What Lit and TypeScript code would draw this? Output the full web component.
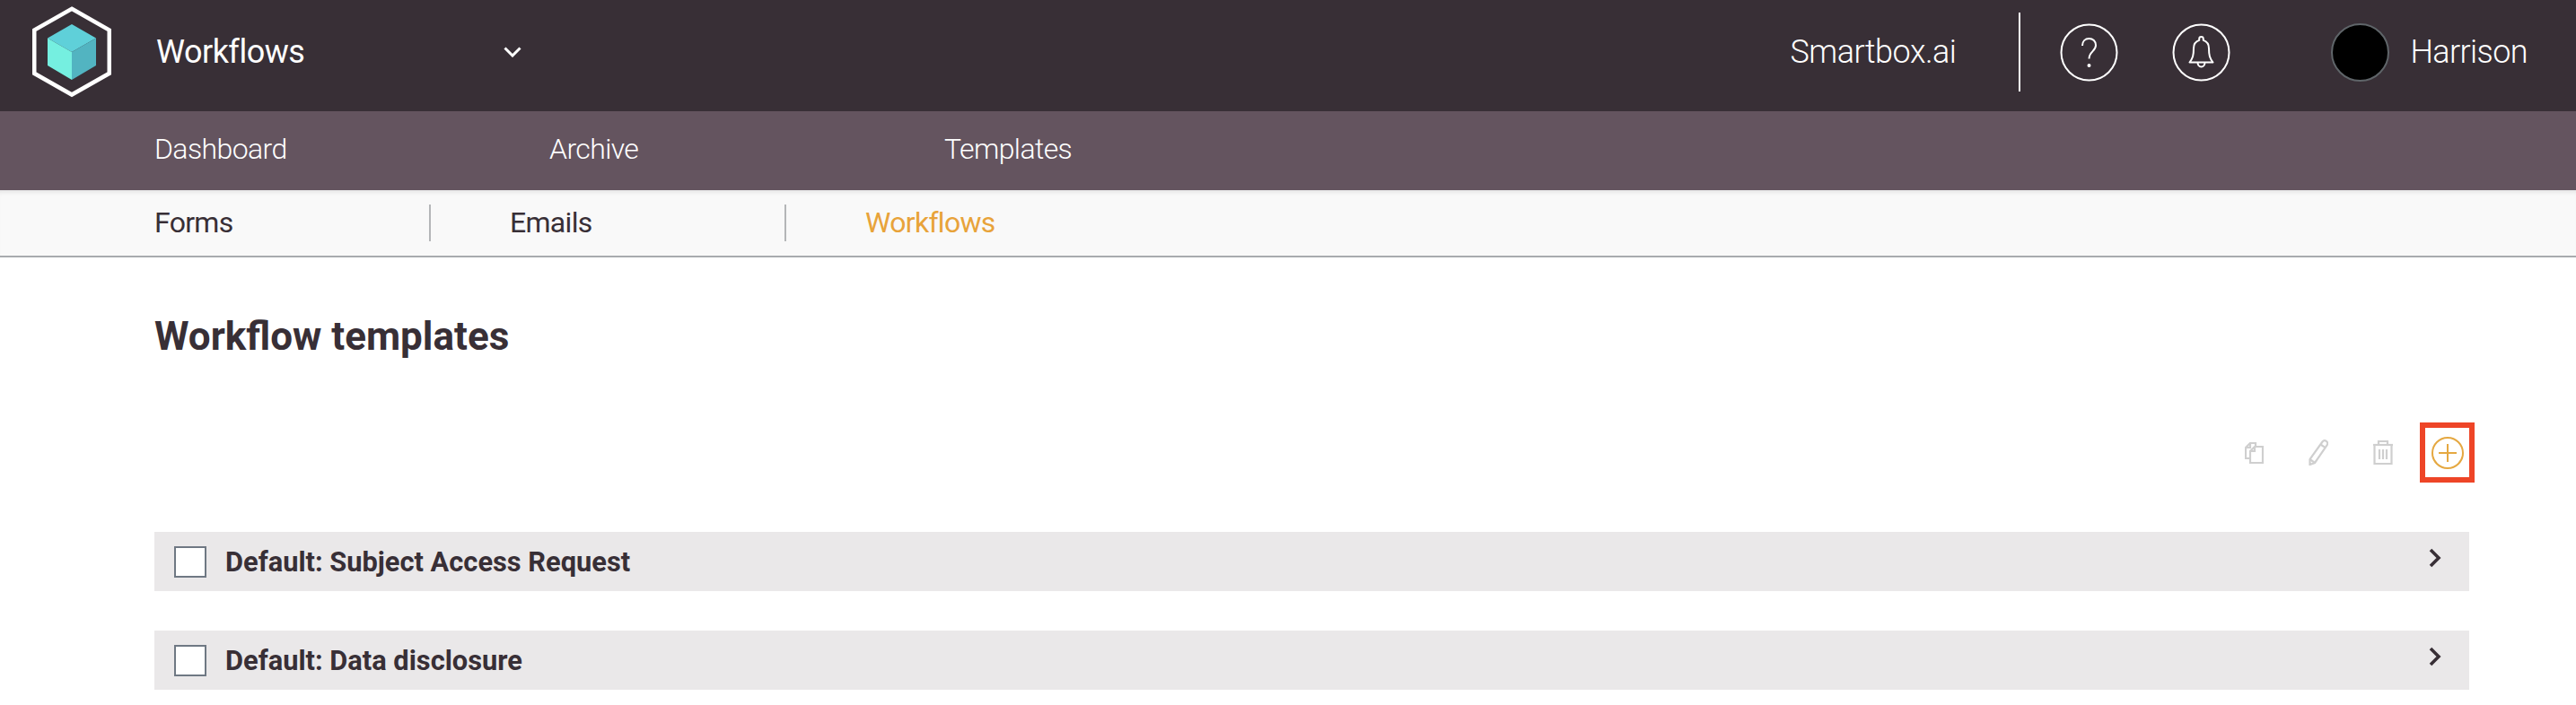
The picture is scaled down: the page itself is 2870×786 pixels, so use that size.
import { LitElement, html, css } from "lit";
import { customElement } from "lit/decorators.js";

const CHEVRON_DOWN = html`<svg class="chev-down" width="20" height="12" viewBox="0 0 20 12"><path d="M1.500 1.500 10 10l8.500-8.500" fill="none" stroke="#fff" stroke-width="3"/></svg>`;

@customElement("app-root")
export class AppRoot extends LitElement {
  static override styles = css`
    :host {
      display: block;
      font-family: Roboto, "Liberation Sans", sans-serif;
      color: #382f36;
      background: #fff;
      height: 786px;
      overflow: hidden;
    }
    svg {
      display: block;
      flex: none;
    }
    .top {
      height: 124px;
      box-sizing: border-box;
      background: #382f36;
      color: #fff;
      display: flex;
      align-items: center;
      padding: 0 54px 8px 36px;
    }
    .logo {
      margin-right: 50px;
    }
    .app-title {
      width: 387px;
      font-size: 36px;
      font-weight: 400;
      letter-spacing: -0.5px;
    }
    .top-right {
      margin-left: auto;
      display: flex;
      align-items: center;
    }
    .org {
      font-size: 36px;
      font-weight: 300;
      letter-spacing: -0.5px;
    }
    .vr {
      width: 2px;
      height: 88px;
      background: #fff;
      margin: 0 44px 0 70px;
    }
    .round {
      width: 65px;
      height: 65px;
      margin-right: 60px;
    }
    .round.bell {
      margin-right: 112px;
    }
    .avatar {
      width: 61px;
      height: 61px;
      border-radius: 50%;
      background: #000;
      border: 2px solid #5f6569;
      margin-right: 23px;
    }
    .user {
      font-size: 36px;
      font-weight: 300;
      letter-spacing: -0.6px;
    }
    .nav {
      height: 88px;
      box-sizing: border-box;
      background: #64545f;
      color: #fff;
      display: flex;
      align-items: center;
      padding: 0 0 5px 172px;
    }
    .nav a {
      width: 440px;
      font-size: 32px;
      font-weight: 300;
      letter-spacing: -0.6px;
    }
    .tabs {
      height: 73px;
      box-sizing: content-box;
      background: #f9f9f9;
      border-bottom: 2px solid #a8abae;
      box-shadow: inset 0 6px 6px -5px rgba(0, 0, 0, 0.12);
      display: flex;
      align-items: center;
      padding-left: 172px;
    }
    .tab {
      font-size: 32px;
      font-weight: 400;
      letter-spacing: -0.7px;
      margin-top: -2px;
    }
    .tab.first {
      width: 306px;
    }
    .tab.mid {
      width: 306px;
    }
    .tab.active {
      color: #e8a33a;
    }
    .sep {
      width: 2px;
      height: 41px;
      background: #b4b6b8;
      margin-right: 88px;
    }
    .content {
      padding: 0 119px 0 172px;
    }
    h1 {
      margin: 0;
      padding-top: 62px;
      font-size: 44px;
      line-height: 52px;
      font-weight: 700;
    }
    .actions {
      display: flex;
      justify-content: flex-end;
      align-items: center;
      margin: 70px -6px 55px 0;
      height: 67px;
    }
    .tool {
      flex: none;
    }
    .tool.copy {
      margin-right: 50px;
    }
    .tool.edit {
      margin-right: 50px;
    }
    .tool.trash {
      margin-right: 30px;
    }
    .add {
      width: 61px;
      height: 67px;
      box-sizing: border-box;
      border: 6px solid #ee4527;
      display: flex;
      align-items: center;
      justify-content: center;
    }
    .row {
      height: 66px;
      background: #eae8e9;
      display: flex;
      align-items: center;
      padding: 0 31px 0 22px;
      margin-bottom: 44px;
    }
    .check {
      width: 36px;
      height: 35px;
      box-sizing: border-box;
      background: #fff;
      border: 2px solid #6f7883;
      margin-right: 21px;
    }
    .row-label {
      font-size: 30.8px;
      font-weight: 700;
      flex: 1;
    }
    .chev-right {
      margin-top: -8px;
    }
  `;

  private renderRow(label: string) {
    return html`
      <div class="row">
        <span class="check"></span>
        <span class="row-label">${label}</span>
        <svg class="chev-right" width="14" height="22" viewBox="0 0 14 22"><path d="M2 2l9 9-9 9" fill="none" stroke="#382f36" stroke-width="3.600"/></svg>
      </div>
    `;
  }

  override render() {
    return html`
      <header class="top">
        <svg class="logo" width="88" height="102" viewBox="36 7 88 102">
          <path d="M80 9.800 121.800 33.600v48.200L80 105.600 38.200 81.800V33.600Z" fill="none" stroke="#fff" stroke-width="4.600"/>
          <path d="M80 27l27 15.500L80 58 53 42.500Z" fill="#5fd0d9"/>
          <path d="M53 42.500 80 58v31L53 73Z" fill="#75efe0"/>
          <path d="M107 42.500 80 58v31l27-16Z" fill="#52b4c1"/>
        </svg>
        <span class="app-title">Workflows</span>
        ${CHEVRON_DOWN}
        <div class="top-right">
          <span class="org">Smartbox.ai</span>
          <span class="vr"></span>
          <svg class="round" viewBox="0 0 65 65">
            <circle cx="32.500" cy="32.500" r="31" fill="none" stroke="#fff" stroke-width="2"/>
            <path d="M25 25c0-5 3.200-8 7.500-8s7.500 3 7.500 7.500c0 6.500-7.500 7-7.500 15" fill="none" stroke="#fff" stroke-width="2"/>
            <circle cx="32.500" cy="47" r="2" fill="#fff"/>
          </svg>
          <svg class="round bell" viewBox="0 0 65 65">
            <circle cx="32.500" cy="32.500" r="31" fill="none" stroke="#fff" stroke-width="2"/>
            <path d="M32.500 15c1.300 0 2.300 1 2.300 2.400v1.500c4.200 1.300 6.200 4.800 6.200 9.100 0 8 1 11 4.500 15.500H19.500c3.500-4.500 4.500-7.500 4.500-15.500 0-4.300 2-7.800 6.200-9.100v-1.500c0-1.400 1-2.400 2.300-2.400Z" fill="none" stroke="#fff" stroke-width="2" stroke-linejoin="round"/>
            <path d="M28.500 43.500c0 3 1.800 5 4 5s4-2 4-5" fill="none" stroke="#fff" stroke-width="2"/>
          </svg>
          <span class="avatar"></span>
          <span class="user">Harrison</span>
        </div>
      </header>
      <nav class="nav">
        <a>Dashboard</a>
        <a>Archive</a>
        <a>Templates</a>
      </nav>
      <div class="tabs">
        <span class="tab first">Forms</span>
        <span class="sep"></span>
        <span class="tab mid">Emails</span>
        <span class="sep"></span>
        <span class="tab active">Workflows</span>
      </div>
      <main class="content">
        <h1>Workflow templates</h1>
        <div class="actions">
          <svg class="tool copy" width="21" height="24" viewBox="0 0 21 24" fill="none" stroke="#cfcfcf" stroke-width="2.200">
            <path d="M5 18H1V6l5-5h6v3"/>
            <path d="M6 1v5H1"/>
            <path d="M11 5h9v18H6V10Z"/>
            <path d="M11 5v5H6"/>
          </svg>
          <svg class="tool edit" width="22" height="29" viewBox="0 0 22 29" fill="none" stroke="#cfcfcf" stroke-width="2.200">
            <path d="M15.500 2.500c1.500-2 3.500-1.500 5 0 1 1 .8 2.700 0 4L7 26l-5.500 2L1.500 22Z"/>
            <path d="M1.500 22 7 26"/>
            <path d="M13.500 5.500l5.500 3.800"/>
          </svg>
          <svg class="tool trash" width="22" height="27" viewBox="0 0 22 27" fill="none" stroke="#cfcfcf" stroke-width="2.200">
            <path d="M0 5h22"/>
            <path d="M6 5V1h10v4"/>
            <path d="M1.500 5v21h19V5"/>
            <path d="M7 10v11M11 10v11M15 10v11"/>
          </svg>
          <div class="add">
            <svg width="36" height="36" viewBox="0 0 36 36" fill="none" stroke="#e5a841" stroke-width="2">
              <circle cx="18" cy="18" r="17"/>
              <path d="M18 8v20M8 18h20"/>
            </svg>
          </div>
        </div>
        ${this.renderRow("Default: Subject Access Request")}
        ${this.renderRow("Default: Data disclosure")}
      </main>
    `;
  }
}
